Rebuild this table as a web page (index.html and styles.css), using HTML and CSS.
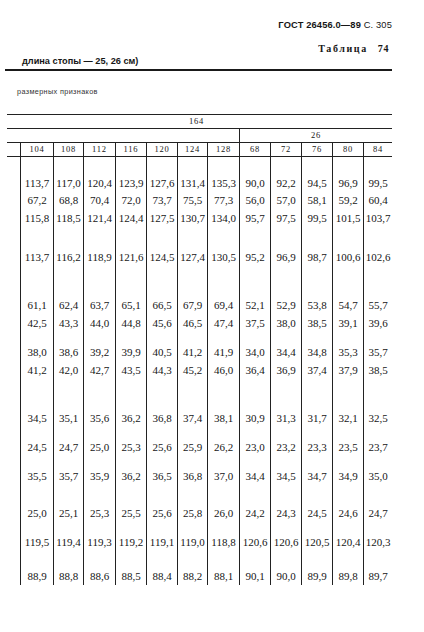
FILE: index.html
```html
<!DOCTYPE html>
<html lang="ru">
<head>
<meta charset="utf-8">
<title>ГОСТ 26456.0—89 С. 305</title>
<link rel="stylesheet" href="styles.css">
</head>
<body>
<div class="page">
  <header class="doc-head">
    <div class="std"><b>ГОСТ 26456.0—89</b> С. 305</div>
    <div class="caption"><span class="cap-word">Таблица</span><b>74</b></div>
  </header>
  <div class="title">длина стопы — 25, 26 см)</div>
  <div class="subtitle">размерных признаков</div>
  <div class="tbl">
    <div class="hrow-a">164</div>
    <div class="hrow-b"><span></span><span class="group">26</span></div>
    <div class="grid hrow-c"><span></span><span>104</span><span>108</span><span>112</span><span>116</span><span>120</span><span>124</span><span>128</span><span>68</span><span>72</span><span>76</span><span>80</span><span>84</span></div>
    <div class="body">
      <div class="grid row h33"><span></span><span>113,7</span><span>117,0</span><span>120,4</span><span>123,9</span><span>127,6</span><span>131,4</span><span>135,3</span><span>90,0</span><span>92,2</span><span>94,5</span><span>96,9</span><span>99,5</span></div>
      <div class="grid row h17"><span></span><span>67,2</span><span>68,8</span><span>70,4</span><span>72,0</span><span>73,7</span><span>75,5</span><span>77,3</span><span>56,0</span><span>57,0</span><span>58,1</span><span>59,2</span><span>60,4</span></div>
      <div class="grid row h18"><span></span><span>115,8</span><span>118,5</span><span>121,4</span><span>124,4</span><span>127,5</span><span>130,7</span><span>134,0</span><span>95,7</span><span>97,5</span><span>99,5</span><span>101,5</span><span>103,7</span></div>
      <div class="grid row h39"><span></span><span>113,7</span><span>116,2</span><span>118,9</span><span>121,6</span><span>124,5</span><span>127,4</span><span>130,5</span><span>95,2</span><span>96,9</span><span>98,7</span><span>100,6</span><span>102,6</span></div>
      <div class="grid row h48"><span></span><span>61,1</span><span>62,4</span><span>63,7</span><span>65,1</span><span>66,5</span><span>67,9</span><span>69,4</span><span>52,1</span><span>52,9</span><span>53,8</span><span>54,7</span><span>55,7</span></div>
      <div class="grid row h18"><span></span><span>42,5</span><span>43,3</span><span>44,0</span><span>44,8</span><span>45,6</span><span>46,5</span><span>47,4</span><span>37,5</span><span>38,0</span><span>38,5</span><span>39,1</span><span>39,6</span></div>
      <div class="grid row h29"><span></span><span>38,0</span><span>38,6</span><span>39,2</span><span>39,9</span><span>40,5</span><span>41,2</span><span>41,9</span><span>34,0</span><span>34,4</span><span>34,8</span><span>35,3</span><span>35,7</span></div>
      <div class="grid row h18"><span></span><span>41,2</span><span>42,0</span><span>42,7</span><span>43,5</span><span>44,3</span><span>45,2</span><span>46,0</span><span>36,4</span><span>36,9</span><span>37,4</span><span>37,9</span><span>38,5</span></div>
      <div class="grid row h48"><span></span><span>34,5</span><span>35,1</span><span>35,6</span><span>36,2</span><span>36,8</span><span>37,4</span><span>38,1</span><span>30,9</span><span>31,3</span><span>31,7</span><span>32,1</span><span>32,5</span></div>
      <div class="grid row h29"><span></span><span>24,5</span><span>24,7</span><span>25,0</span><span>25,3</span><span>25,6</span><span>25,9</span><span>26,2</span><span>23,0</span><span>23,2</span><span>23,3</span><span>23,5</span><span>23,7</span></div>
      <div class="grid row h29"><span></span><span>35,5</span><span>35,7</span><span>35,9</span><span>36,2</span><span>36,5</span><span>36,8</span><span>37,0</span><span>34,4</span><span>34,5</span><span>34,7</span><span>34,9</span><span>35,0</span></div>
      <div class="grid row h37"><span></span><span>25,0</span><span>25,1</span><span>25,3</span><span>25,5</span><span>25,6</span><span>25,8</span><span>26,0</span><span>24,2</span><span>24,3</span><span>24,5</span><span>24,6</span><span>24,7</span></div>
      <div class="grid row h29"><span></span><span>119,5</span><span>119,4</span><span>119,3</span><span>119,2</span><span>119,1</span><span>119,0</span><span>118,8</span><span>120,6</span><span>120,6</span><span>120,5</span><span>120,4</span><span>120,3</span></div>
      <div class="grid row h36 last"><span></span><span>88,9</span><span>88,8</span><span>88,6</span><span>88,5</span><span>88,4</span><span>88,2</span><span>88,1</span><span>90,1</span><span>90,0</span><span>89,9</span><span>89,8</span><span>89,7</span></div>
    </div>
  </div>
</div>
</body>
</html>
```

FILE: styles.css
```css
html, body {
  margin: 0;
  padding: 0;
  background: #fff;
}

.page {
  width: 424px;
  height: 632px;
  overflow: hidden;
  color: #161616;
  font-family: "Liberation Serif", "Times New Roman", serif;
}

.doc-head {
  padding: 19px 32px 0 0;
  text-align: right;
}

.std {
  font-family: "Liberation Sans", Arial, sans-serif;
  font-size: 9.3px;
  line-height: 12px;
  letter-spacing: 0.15px;
}

.std b {
  font-weight: bold;
}

.caption {
  margin-top: 12px;
  padding-right: 3px;
  font-family: "Liberation Serif", serif;
  font-weight: bold;
  font-size: 10px;
  line-height: 12px;
}

.cap-word {
  letter-spacing: 1.6px;
  margin-right: 10px;
}

.caption b {
  letter-spacing: 0.6px;
}

.title {
  margin-left: 5px;
  width: 370px;
  padding: 0 0 2px 17px;
  border-bottom: 2px solid #1a1a1a;
  font-family: "Liberation Sans", Arial, sans-serif;
  font-weight: bold;
  font-size: 9.2px;
  line-height: 12px;
}

.subtitle {
  margin: 16px 0 0 17px;
  font-family: "Liberation Sans", Arial, sans-serif;
  font-size: 7.3px;
  line-height: 10px;
  letter-spacing: 0.35px;
  color: #333;
}

.tbl {
  margin: 17px 0 0 7px;
  width: 385px;
  border-top: 1px solid #222;
  font-size: 11px;
}

.hrow-a {
  height: 13px;
  line-height: 13px;
  padding-left: 182px;
  font-size: 8.5px;
  letter-spacing: 0.8px;
  border-bottom: 1px solid #222;
}

.hrow-b {
  display: grid;
  grid-template-columns: 232px 153px;
  height: 13px;
  border-bottom: 1px solid #222;
}

.group {
  border-left: 1px solid #222;
  text-align: center;
  font-size: 8.5px;
  line-height: 13px;
  letter-spacing: 0.8px;
}

.grid {
  display: grid;
  grid-template-columns: 13px 33px 30px 32px 31px 31px 30px 32px 31px 31px 31px 31px 29px;
}

.grid > span + span {
  border-left: 1px solid #222;
  text-align: center;
}

.hrow-c {
  height: 13px;
  border-bottom: 1px solid #222;
}

.hrow-c > span {
  font-size: 8.5px;
  line-height: 13px;
  letter-spacing: 0.8px;
}

.row > span {
  display: flex;
  align-items: flex-end;
  justify-content: center;
  line-height: 14px;
  font-size: 11px;
}

.row.last > span {
  padding-bottom: 2px;
}

.h17 { height: 17px; }
.h18 { height: 18px; }
.h29 { height: 29px; }
.h33 { height: 33px; }
.h36 { height: 36px; }
.h37 { height: 37px; }
.h39 { height: 39px; }
.h48 { height: 48px; }
```
